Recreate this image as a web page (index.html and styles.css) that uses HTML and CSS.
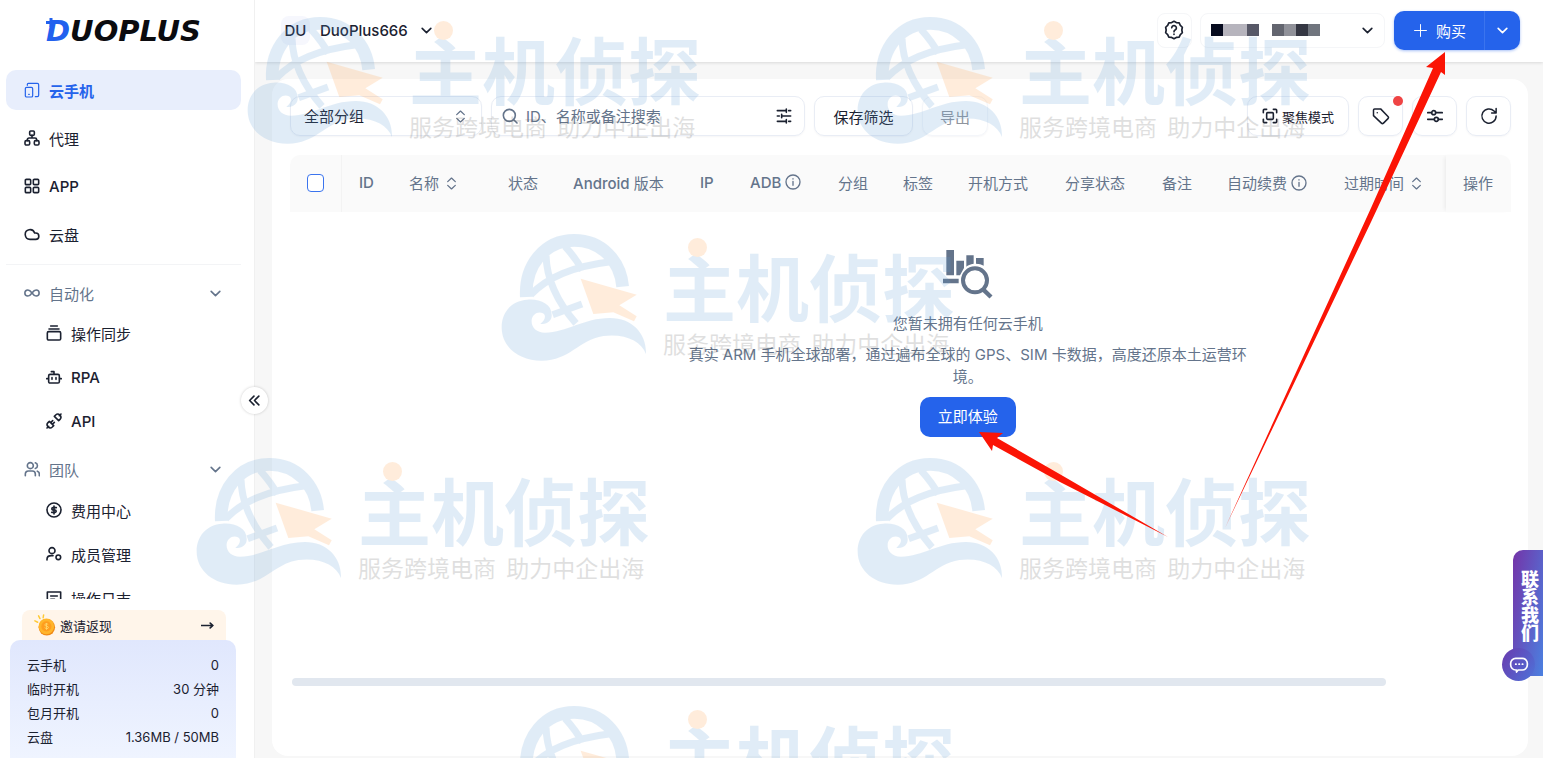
FILE: index.html
```html
<!DOCTYPE html>
<html lang="zh-CN">
<head>
<meta charset="utf-8">
<meta name="viewport" content="width=device-width, initial-scale=1">
<title>DuoPlus</title>
<link rel="stylesheet" href="styles.css">
</head>
<body>
<svg class="sprite" aria-hidden="true">
  <symbol id="chevron" viewBox="0 0 24 24"><path d="M4 8l8 8 8-8"/></symbol>
  <symbol id="sort" viewBox="0 0 24 24"><path d="M5 8.500l7-6.500 7 6.500M5 15.500l7 6.500 7-6.500"/></symbol>
  <symbol id="info" viewBox="0 0 24 24"><circle cx="12" cy="12" r="10.500"/><path d="M12 11v6M12 7v.5"/></symbol>
  <symbol id="emblem" viewBox="30 25 450 390">
    <g fill="none" stroke="#5b9bd5">
      <path stroke-width="38" d="M109 217C104 120 165 47 253 47c82 0 138 62 145 139"/>
      <path stroke-width="21" d="M168 92c2 72 34 140 90 204M225 65c20 22 38 45 52 72M122 210c52-52 120-84 250-100M188 270l88-32"/>
    </g>
    <path fill="#5b9bd5" d="M185 270C185 238 150 222 112 225 65 228 35 262 35 308c0 60 52 100 120 100 85 0 110-62 185-74 66-8 114 16 128 54 2-62-42-108-108-108-80 0-130 44-195 44-26 0-42-16-40-38 2-16 18-28 34-20 12 8 4 22-8 31 18 4 36-8 34-27z"/>
    <path fill="#ff9a3c" d="M272 162l168 48-52 32 52 33-8 15-62-27-60 5z"/>
  </symbol>
</svg>

<div class="app">
  <aside class="sidebar">
    <a class="logo" href="#" aria-label="DuoPlus"><span class="logo-d">D</span>UOPLUS
      <svg class="logo-plus" viewBox="0 0 10 10"><path d="M5 0v9M0 4.500h10"/></svg></a>
    <nav class="nav">
      <a class="item active" href="#"><svg class="icon thin" viewBox="0 0 24 24"><path d="M5 5V3.500A1.500 1.500 0 0 1 6.500 2H20a2 2 0 0 1 2 2v16a2 2 0 0 1-2 2h-3"/><rect x="2" y="8" width="11" height="14.500" rx="2"/><path d="M7 18.500h1"/></svg>云手机</a>
      <a class="item" href="#"><svg class="icon" viewBox="0 0 24 24"><rect x="8.500" y="1.500" width="7" height="6.500" rx="1.500"/><rect x="1.500" y="16" width="7" height="6.500" rx="2"/><rect x="15.500" y="16" width="7" height="6.500" rx="2"/><path d="M12 8v4M5 16v-1.500A2.500 2.500 0 0 1 7.500 12h9a2.500 2.500 0 0 1 2.500 2.500V16"/></svg>代理</a>
      <a class="item latin" href="#"><svg class="icon" viewBox="0 0 24 24"><rect x="2" y="2" width="8" height="8" rx="1.500"/><rect x="14" y="2" width="8" height="8" rx="1.500"/><rect x="2" y="14" width="8" height="8" rx="1.500"/><rect x="14" y="14" width="8" height="8" rx="1.500"/></svg>APP</a>
      <a class="item" href="#"><svg class="icon" viewBox="0 0 24 24"><path d="M17.500 20H9a7.200 7.200 0 1 1 6.900-9.500h1.600a4.750 4.750 0 1 1 0 9.500z"/></svg>云盘</a>
      <hr class="rule">
      <button class="group" type="button"><svg class="icon" viewBox="0 0 24 24"><path d="M12 12c-2-2.800-4-4.500-6.200-4.500a4.500 4.500 0 0 0 0 9C8 16.500 10 14.800 12 12zM12 12c2 2.800 4 4.500 6.200 4.500a4.500 4.500 0 0 0 0-9C16 7.500 14 9.200 12 12z"/></svg>自动化<svg class="icon small end"><use href="#chevron"/></svg></button>
      <a class="sub" href="#"><svg class="icon" viewBox="0 0 24 24"><path d="M7 1.500h10M4.500 6h15"/><rect x="2" y="10" width="20" height="12.500" rx="2"/></svg>操作同步</a>
      <a class="sub latin" href="#"><svg class="icon" viewBox="0 0 24 24"><path d="M12 8V4H8M1 14.500h2.500M20.500 14.500H23M9 13v2.500M15 13v2.500"/><rect x="4" y="8" width="16" height="13" rx="2"/></svg>RPA</a>
      <a class="sub latin" href="#"><svg class="icon" viewBox="0 0 24 24"><path d="M20 4l2.500-2.500M1.500 22.500L4 20M5 12.500l6.500 6.500-2 2a4.600 4.600 0 0 1-6.500-6.500zM19 11.500L12.500 5l2-2A4.600 4.600 0 0 1 21 9.500zM7.500 14L10 11.500M10 16.500L12.500 14"/></svg>API</a>
      <button class="group" type="button"><svg class="icon" viewBox="0 0 24 24"><circle cx="9.500" cy="7" r="4.500"/><path d="M2 22v-2.500A4.500 4.500 0 0 1 6.500 15h6a4.500 4.500 0 0 1 4.500 4.500V22M17 2.700a4.500 4.500 0 0 1 0 8.600M23 22v-2.500a4.500 4.500 0 0 0-3-4.300"/></svg>团队<svg class="icon small end"><use href="#chevron"/></svg></button>
      <a class="sub" href="#"><svg class="icon" viewBox="0 0 24 24"><circle cx="12" cy="12" r="10.500"/><path d="M15.500 8.500H10.500a1.750 1.750 0 0 0 0 3.500h3a1.750 1.750 0 0 1 0 3.500H8.500M12 6v12"/></svg>费用中心</a>
      <a class="sub" href="#"><svg class="icon" viewBox="0 0 24 24"><circle cx="9" cy="7" r="4.500"/><path d="M1.500 21v-1c0-3.500 2.500-5.500 6.500-5.500h2.500"/><circle cx="18.500" cy="17" r="3.500"/></svg>成员管理</a>
      <a class="sub" href="#"><svg class="icon" viewBox="0 0 24 24"><path d="M2 22V3h20v19zM7 9h10M7 14h6"/></svg>操作日志</a>
    </nav>
    <div class="foot">
      <a class="invite" href="#"><svg class="coin" viewBox="0 0 24 24"><path d="M4 9L1 7.500M6.500 5L5 2M10 4l.5-3" stroke="#ffc933" stroke-width="1.600" stroke-linecap="round"/><circle cx="14" cy="14.500" r="9" fill="#f08a16"/><circle cx="13.500" cy="13.500" r="8.500" fill="#ffb52b"/><circle cx="13.500" cy="13.500" r="5.500" fill="#ff9d1e"/><path d="M15.500 11.500c-1-1.200-4-1-3.700.6.300 1.600 4 .8 4 2.600 0 1.500-3 1.600-4.200.2M13.600 9.800v7.500" fill="none" stroke="#ffd76b"/></svg>邀请返现<svg class="icon small end" viewBox="0 0 24 24"><path d="M1 12h21M17 7.500l5 4.500-5 4.500"/></svg></a>
      <dl class="usage">
        <div><dt>云手机</dt><dd>0</dd></div>
        <div><dt>临时开机</dt><dd>30 分钟</dd></div>
        <div><dt>包月开机</dt><dd>0</dd></div>
        <div><dt>云盘</dt><dd>1.36MB / 50MB</dd></div>
      </dl>
    </div>
    <button class="collapse" type="button" aria-label="收起"><svg class="icon small" viewBox="0 0 24 24"><path d="M11 4l-8 8 8 8M20 4l-8 8 8 8"/></svg></button>
  </aside>

  <div class="page">
    <header class="header">
      <button class="team" type="button"><span class="avatar">DU</span>DuoPlus666<svg class="icon small"><use href="#chevron"/></svg></button>
      <button class="help" type="button" aria-label="帮助"><svg class="icon big" viewBox="0 0 24 24"><path d="M12 1.500l2.800 1.600 3.400.3 1.400 3 2.400 2.300-.6 3.300.6 3.300-2.400 2.300-1.400 3-3.400.3-2.800 1.600-2.800-1.600-3.400-.3-1.400-3L2 15.300l.6-3.300L2 8.700l2.400-2.300 1.400-3 3.400-.3z"/><path d="M9.300 9.300a2.800 2.800 0 1 1 4 2.800c-.9.500-1.300.9-1.300 1.900M12 17v.4"/></svg></button>
      <button class="account" type="button" aria-label="账户">
        <span class="mosaic"><i class="m1"></i><i class="m2"></i><i class="m3"></i></span>
        <span class="mosaic"><i class="m4"></i><i class="m5"></i><i class="m6"></i><i class="m7"></i></span>
        <svg class="icon small end"><use href="#chevron"/></svg>
      </button>
      <div class="buy">
        <button class="buy-main" type="button"><svg class="icon small thin" viewBox="0 0 24 24"><path d="M12 1v22M1 12h22"/></svg>购买</button>
        <button class="buy-more" type="button" aria-label="更多"><svg class="icon small"><use href="#chevron"/></svg></button>
      </div>
    </header>

    <main class="main">
      <section class="card">
        <div class="toolbar">
          <label class="field picker"><select aria-label="分组"><option>全部分组</option></select><svg class="icon small"><use href="#sort"/></svg></label>
          <label class="field search"><svg class="icon" viewBox="0 0 24 24"><circle cx="11" cy="11" r="9"/><path d="M18 18l4.500 4.500"/></svg><input type="text" aria-label="搜索" placeholder="ID、名称或备注搜索"><svg class="icon dark" viewBox="0 0 24 24"><path d="M2 4h12M19 4h3M15.500 1.500v5M2 12h3M10 12h12M8.500 9.500v5M2 20h12M19 20h3M15.500 17.500v5"/></svg></label>
          <button class="field save" type="button">保存筛选</button>
          <button class="field export" type="button" disabled>导出</button>
          <span class="spacer"></span>
          <button class="field focus" type="button"><svg class="icon" viewBox="0 0 24 24"><path d="M2 7V3.500A1.500 1.500 0 0 1 3.500 2H7M17 2h3.500A1.500 1.500 0 0 1 22 3.500V7M22 17v3.500a1.500 1.500 0 0 1-1.500 1.500H17M7 22H3.500A1.500 1.500 0 0 1 2 20.500V17"/><rect x="7" y="7" width="10" height="10" rx="1.500"/></svg>聚焦模式</button>
          <button class="field square" type="button" aria-label="标签"><svg class="icon mid" viewBox="0 0 24 24"><path d="M2 4v7.500l10.500 10c.8.800 2 .8 2.800 0l6-6c.8-.8.8-2 0-2.800L11.500 2.500H3.500A1.500 1.500 0 0 0 2 4zM7 7.500v.2"/></svg><i class="badge"></i></button>
          <button class="field square" type="button" aria-label="列设置"><svg class="icon" viewBox="0 0 24 24"><path d="M1 7h6M13 7h10M1 17h10M17 17h6"/><circle cx="10" cy="7" r="3"/><circle cx="14" cy="17" r="3"/></svg></button>
          <button class="field square" type="button" aria-label="刷新"><svg class="icon mid" viewBox="0 0 24 24"><path d="M21.500 12a9.500 9.500 0 1 1-2.800-6.700L21.500 8M21.500 2v6h-6"/></svg></button>
        </div>

        <table class="grid">
          <colgroup><col class="w52"><col class="w50"><col class="w99"><col class="w65"><col class="w127"><col class="w50"><col class="w88"><col class="w65"><col class="w65"><col class="w97"><col class="w97"><col class="w65"><col class="w117"><col class="w119"><col class="w65"></colgroup>
          <thead><tr>
            <th class="check"><input type="checkbox" aria-label="全选"></th>
            <th class="latin">ID</th>
            <th>名称 <svg class="icon sort"><use href="#sort"/></svg></th>
            <th>状态</th><th><span class="latin">Android</span> 版本</th><th class="latin">IP</th>
            <th class="latin">ADB <svg class="icon"><use href="#info"/></svg></th>
            <th>分组</th><th>标签</th><th>开机方式</th><th>分享状态</th><th>备注</th>
            <th>自动续费 <svg class="icon"><use href="#info"/></svg></th>
            <th>过期时间 <svg class="icon sort"><use href="#sort"/></svg></th>
            <th class="pinned">操作</th>
          </tr></thead>
        </table>

        <div class="body">
          <div class="empty">
            <svg class="empty-icon" viewBox="0 0 150 147"><path d="M10 0h23v76H10zM0 86h47v14H0zM40 32h23v22L51 76H40zM70 16h22v25c-10 1-18 5-22 9zM99 24h23v23c-6-4-14-6-23-6z"/><circle cx="96" cy="91" r="36" fill="none" stroke="#64748b" stroke-width="12"/><path d="M121 119l23 22" stroke="#64748b" stroke-width="13"/></svg>
            <p class="empty-title">您暂未拥有任何云手机</p>
            <p class="empty-text">真实 ARM 手机全球部署，通过遍布全球的 GPS、SIM 卡数据，高度还原本土运营环境。</p>
            <button class="try" type="button">立即体验</button>
          </div>
        </div>
        <div class="scroll"></div>
      </section>
    </main>
  </div>

  <button class="contact" type="button"><span class="contact-text">联系我们</span><span class="bubble"><svg class="icon big" viewBox="0 0 24 24"><path d="M8 4h8a6 6 0 0 1 6 6v2a6 6 0 0 1-6 6h-5l-2 2.500V18H8a6 6 0 0 1-6-6v-2a6 6 0 0 1 6-6zM8 11h.5M12 11h.5M16 11h.5"/></svg></span></button>

  <div class="marks" aria-hidden="true">
    <div class="mark a"><svg><use href="#emblem"/></svg><div class="mark-text"><b>主机侦探</b><span>服务跨境电商&nbsp; 助力中企出海</span></div></div>
    <div class="mark b"><svg><use href="#emblem"/></svg><div class="mark-text"><b>主机侦探</b><span>服务跨境电商&nbsp; 助力中企出海</span></div></div>
    <div class="mark c"><svg><use href="#emblem"/></svg><div class="mark-text"><b>主机侦探</b><span>服务跨境电商&nbsp; 助力中企出海</span></div></div>
    <div class="mark d"><svg><use href="#emblem"/></svg><div class="mark-text"><b>主机侦探</b><span>服务跨境电商&nbsp; 助力中企出海</span></div></div>
    <div class="mark e"><svg><use href="#emblem"/></svg><div class="mark-text"><b>主机侦探</b><span>服务跨境电商&nbsp; 助力中企出海</span></div></div>
    <div class="mark f"><svg><use href="#emblem"/></svg><div class="mark-text"><b>主机侦探</b></div></div>
    <svg class="arrows" viewBox="0 0 1543 758"><path d="M1445 52l-19 15 7 1-62 140-146 320L1371 222l70-150 4 3zM979 432l24 1-6 5 66 38 105 61-108-55-67-37-1 6z"/></svg>
  </div>
</div>
</body>
</html>
```
FILE: styles.css
```css
* { box-sizing: border-box; }

body {
  margin: 0;
  font-family: Inter, "Noto Sans CJK SC", sans-serif;
  font-size: 15px;
  color: #1b2130;
  background: #f7f7f7;
}

button, input, select {
  font: inherit;
  color: inherit;
  border: 0;
  padding: 0;
  background: none;
}

a { color: inherit; text-decoration: none; }
p, dl, dd { margin: 0; }

.sprite { position: absolute; width: 0; height: 0; }

.icon {
  width: 16px;
  height: 16px;
  flex: none;
  fill: none;
  stroke: currentColor;
  stroke-width: 2.4;
  stroke-linecap: round;
  stroke-linejoin: round;
}
.icon.small { width: 13px; height: 13px; stroke-width: 3; }
.icon.mid { width: 18px; height: 18px; stroke-width: 2; }
.icon.big { width: 20px; height: 20px; stroke-width: 2; }
.icon.thin { stroke-width: 1.8; }
.end { margin-left: auto; }

.app {
  position: relative;
  display: flex;
  height: 100vh;
  overflow: hidden;
}

/* Sidebar */
.sidebar {
  position: relative;
  z-index: 2;
  display: flex;
  flex-direction: column;
  flex: 0 0 255px;
  background: #fff;
  border-right: 1px solid #f0f0f0;
}

.logo {
  position: relative;
  align-self: flex-start;
  margin-left: 46px;
  font: italic bold 29px/62px "DejaVu Sans", sans-serif;
  color: #0b0b0f;
}
.logo-d { color: #2161ee; }
.logo-plus {
  position: absolute;
  top: 18px;
  left: 0;
  width: 10px;
  height: 10px;
  stroke: #2161ee;
  stroke-width: 3;
}

.nav {
  display: flex;
  flex-direction: column;
  flex: 1;
  min-height: 0;
  overflow: hidden;
  padding: 8px 13px 0 6px;
}
.nav > * { flex: none; }

.item, .group, .sub {
  display: flex;
  align-items: center;
  gap: 9px;
}
.item, .group { padding: 0 19px 0 18px; }
.item {
  height: 40px;
  margin-bottom: 8px;
  border-radius: 10px;
}
.latin { font-weight: 500; }
.active {
  background: #e8eefc;
  color: #2563eb;
  font-weight: 700;
}
.rule {
  width: 100%;
  height: 1px;
  margin: 2px 0 8px;
  border: 0;
  background: #f3f4f6;
}
.group { height: 40px; color: #64748b; }
.sub {
  height: 44px;
  padding-left: 40px;
}
.group + .sub { height: 40px; margin-bottom: 2px; }
.sub + .group { height: 47px; padding-top: 5px; }

.foot { padding: 11px 18px 0 10px; }
.invite {
  display: flex;
  align-items: center;
  gap: 4px;
  height: 30px;
  margin: 0 10px 0 12px;
  padding: 0 12px;
  border-radius: 8px 8px 0 0;
  background: #fff5ea;
  font-size: 13px;
}
.coin { width: 22px; height: 22px; fill: none; }
.usage {
  padding: 13px 17px 9px;
  border-radius: 10px 10px 0 0;
  background: linear-gradient(#e0e7fd, #eff4ff);
  font-size: 13px;
  line-height: 24px;
}
.usage div { display: flex; justify-content: space-between; }
.usage dt, .usage dd { white-space: nowrap; }

.collapse {
  position: absolute;
  top: 387px;
  right: -14px;
  display: grid;
  place-items: center;
  width: 27px;
  height: 27px;
  border-radius: 50%;
  background: #fff;
  box-shadow: 0 0 3px #0003;
}

/* Header */
.page {
  display: flex;
  flex-direction: column;
  flex: 1;
  min-width: 0;
}
.header {
  display: flex;
  align-items: center;
  flex: 0 0 62px;
  padding: 0 23px 2px 26px;
  background: #fff;
  box-shadow: 0 1px 3px #0000001f;
}
.team {
  display: flex;
  align-items: center;
  gap: 12px;
  margin-right: auto;
  font-weight: 500;
}
.avatar {
  display: grid;
  place-items: center;
  width: 29px;
  height: 29px;
  margin-right: -2px;
  border-radius: 8px;
  background: #f6f7fd;
}
.help {
  display: grid;
  place-items: center;
  width: 35px;
  height: 35px;
  margin-right: 8px;
  border: 1px solid #f5f6f8;
  border-radius: 8px;
}
.account {
  display: flex;
  align-items: center;
  gap: 13px;
  width: 185px;
  height: 35px;
  margin-right: 9px;
  padding: 0 10px;
  border: 1px solid #f5f6f8;
  border-radius: 8px;
}
.mosaic { display: flex; }
.mosaic i { width: 12px; height: 12px; }
.mosaic .m1 { background: #060b1e; }
.mosaic .m2 { width: 24px; background: #b6b4bd; }
.mosaic .m3 { background: #575867; }
.mosaic .m4 { background: #63656f; }
.mosaic .m5 { background: #909199; }
.mosaic .m6 { background: #353743; }
.mosaic .m7 { background: #70757e; }

.buy {
  display: flex;
  height: 39px;
  border-radius: 10px;
  background: #2563eb;
  color: #fff;
  box-shadow: 0 1px 3px #2563eb66;
}
.buy-main {
  display: flex;
  align-items: center;
  gap: 9px;
  padding: 0 18px 0 20px;
}
.buy-more {
  display: grid;
  place-items: center;
  width: 36px;
  border-left: 1px solid #3b74ee;
}

/* Content */
.main {
  display: flex;
  flex: 1;
  min-height: 0;
  padding: 17px 15px 2px 17px;
}
.card {
  display: flex;
  flex-direction: column;
  flex: 1;
  min-width: 0;
  padding: 17px 17px 70px 18px;
  border-radius: 16px;
  background: #fff;
}
.toolbar { display: flex; gap: 9px; }
.spacer { flex: 1; }
.field {
  display: flex;
  align-items: center;
  justify-content: center;
  height: 40px;
  border: 1px solid #e9edf5;
  border-radius: 10px;
  box-shadow: 0 1px 2px #0f172a0a;
}
.picker { width: 192px; padding: 0 14px 0 13px; }
.picker select { flex: 1; appearance: none; outline: 0; }
.picker .icon { color: #64748b; stroke-width: 2.4; }
.search { width: 314px; padding: 0 12px 0 10px; gap: 8px; color: #64748b; }
.search input { flex: 1; min-width: 0; outline: 0; }
.search input::placeholder { color: #64748b; opacity: 1; }
.search .dark { color: #1b2130; }
.save { width: 99px; }
.export { width: 66px; color: #8f949d; border-color: #f4f6fa; }
.focus { width: 102px; gap: 4px; font-size: 13px; }
.square { position: relative; width: 45px; }
.badge {
  position: absolute;
  top: -1px;
  right: -1px;
  width: 10px;
  height: 10px;
  border-radius: 50%;
  background: #ef4444;
}

.grid {
  width: 100%;
  margin-top: 19px;
  table-layout: fixed;
  border-collapse: separate;
  border-spacing: 0;
}
.grid th {
  height: 57px;
  padding: 0 0 2px 17px;
  background: #fafafa;
  color: #64748b;
  font-weight: 400;
  text-align: left;
  white-space: nowrap;
}
.grid th.latin { font-weight: 500; }
.grid th:first-child { border-radius: 10px 0 0 0; }
.grid th:last-child { border-radius: 0 10px 0 0; }
.grid .icon { vertical-align: -2px; stroke-width: 2; }
.grid .sort { width: 13px; height: 13px; margin-left: 2px; vertical-align: -1px; stroke-width: 2.4; }
.grid .check { border-right: 1px solid #f3f3f3; }
.grid .pinned { box-shadow: -3px 0 4px -2px #00000012; }
.grid input {
  display: block;
  width: 17px;
  height: 18px;
  margin: 0;
  appearance: none;
  border: 1px solid #3b74ee;
  border-radius: 4px;
  background: #fff;
}
.w50 { width: 50px; }
.w52 { width: 52px; }
.w65 { width: 65px; }
.w88 { width: 88px; }
.w97 { width: 97px; }
.w99 { width: 99px; }
.w117 { width: 117px; }
.w119 { width: 119px; }
.w127 { width: 127px; }

.body { flex: 1; min-height: 0; overflow: hidden; }
.empty {
  display: flex;
  flex-direction: column;
  align-items: center;
  width: 111%;
  padding-top: 38px;
  color: #64748b;
  line-height: 22px;
  text-align: center;
}
.empty-icon { width: 50px; height: 49px; fill: #64748b; }
.empty-title { margin-top: 14px; }
.empty-text { max-width: 570px; margin: 9px 0; }
.try {
  height: 40px;
  padding: 0 18px;
  border-radius: 10px;
  background: #2563eb;
  color: #fff;
}
.scroll {
  width: calc(90% - 5px);
  height: 8px;
  margin-left: 2px;
  border-radius: 4px;
  background: #e1e7ef;
}

/* Contact tab */
.contact {
  position: absolute;
  z-index: 3;
  top: 550px;
  right: 0;
  display: flex;
  align-items: flex-start;
  width: 30px;
  height: 126px;
  padding: 20px 0 0 2px;
  border-radius: 10px 0 0 0;
  background: linear-gradient(100deg, #7434a8, #4b80e0);
  color: #fff;
  font-size: 18px;
  font-weight: 900;
  line-height: 26px;
}
.contact-text { writing-mode: vertical-rl; }
.bubble {
  position: absolute;
  bottom: -5px;
  left: -11px;
  display: grid;
  place-items: center;
  width: 33px;
  height: 33px;
  border-radius: 50%;
  background: linear-gradient(120deg, #6a3aae, #4d73d9);
}

/* Watermarks and pointer arrows */
.marks {
  position: absolute;
  inset: 0;
  z-index: 4;
  overflow: hidden;
  pointer-events: none;
}
.mark {
  position: absolute;
  display: flex;
  gap: 13px;
  width: 460px;
  opacity: .18;
}
.mark > svg { width: 150px; height: 130px; }
.a { left: 246px; top: 16px; }
.b { left: 856px; top: 16px; }
.c { left: 500px; top: 233px; }
.d { left: 195px; top: 457px; }
.e { left: 856px; top: 457px; }
.f { left: 500px; top: 705px; }
.mark-text {
  position: relative;
  display: flex;
  flex-direction: column;
  padding-top: 13px;
  font-family: "Noto Sans CJK SC", sans-serif;
  white-space: nowrap;
}
.mark-text::before {
  content: "";
  position: absolute;
  top: 5px;
  left: 25px;
  width: 19px;
  height: 19px;
  border-radius: 50%;
  background: #ff9a3c;
}
.mark-text b { font-size: 73px; line-height: 76px; color: #5b9bd5; }
.mark-text span { margin-top: 5px; font-size: 23px; line-height: 32px; color: #555; }
.arrows { position: absolute; inset: 0; width: 100%; height: 100%; fill: #fb1405; }
```
